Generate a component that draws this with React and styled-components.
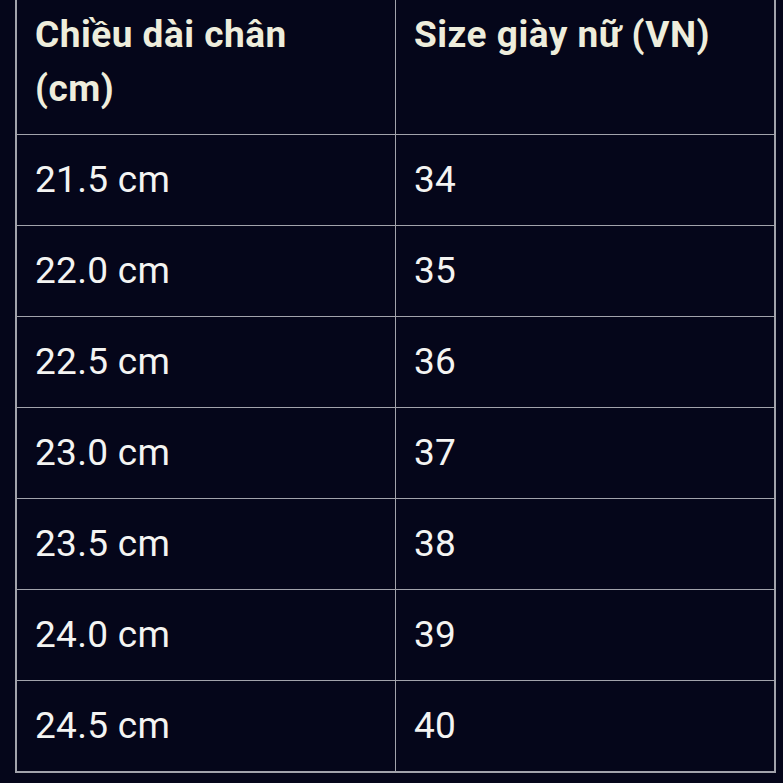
import React from 'react';
import styled, { createGlobalStyle } from 'styled-components';

const GlobalStyle = createGlobalStyle`
    html, body {
        margin: 0;
        padding: 0;
        background: #05061a;
    }
    body {
        font-family: Roboto, "Noto Sans", sans-serif;
        overflow: hidden;
    }
`;

const Page = styled.div`
    width: 783px;
    height: 783px;
    overflow: hidden;
    background: #05061a;
    padding: 0 8px 0 15px;
    box-sizing: border-box;
`;

const Table = styled.table`
    width: 761px;
    margin-top: -12px;
    border-collapse: collapse;
    table-layout: fixed;
    border: 2px solid #a2a3ab;
`;

const HeadCell = styled.th`
    text-align: left;
    vertical-align: top;
    padding: 18px 18px;
    font-size: 37px;
    line-height: 54px;
    font-weight: 700;
    letter-spacing: 0.5px;
    color: #eeeddc;
    border: 1px solid #a2a3ab;
`;

const Cell = styled.td`
    padding: 18px 18px;
    font-size: 37px;
    line-height: 54px;
    font-weight: 400;
    letter-spacing: 0.3px;
    color: #f4f4f2;
    border: 1px solid #a2a3ab;
`;

const sizes = [
    ['21.5 cm', '34'],
    ['22.0 cm', '35'],
    ['22.5 cm', '36'],
    ['23.0 cm', '37'],
    ['23.5 cm', '38'],
    ['24.0 cm', '39'],
    ['24.5 cm', '40'],
];

const App = () => {
    return (
        <Page>
            <GlobalStyle />
            <Table>
                <thead>
                    <tr>
                        <HeadCell>Chiều dài chân<br />(cm)</HeadCell>
                        <HeadCell>Size giày nữ (VN)</HeadCell>
                    </tr>
                </thead>
                <tbody>
                    {sizes.map(([foot, size]) => (
                        <tr key={foot}>
                            <Cell>{foot}</Cell>
                            <Cell>{size}</Cell>
                        </tr>
                    ))}
                </tbody>
            </Table>
        </Page>
    );
};

export default App;
